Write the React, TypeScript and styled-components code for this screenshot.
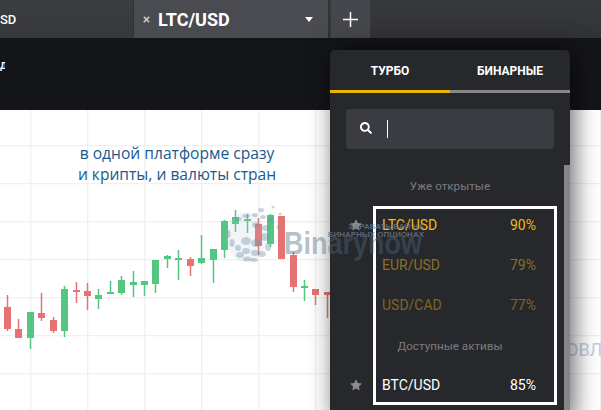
import React from "react";
import styled, { createGlobalStyle } from "styled-components";
import { FaSearch, FaTimes } from "react-icons/fa";

const GlobalStyle = createGlobalStyle`
  html, body {
    margin: 0;
    padding: 0;
    background: #fff;
    font-family: Roboto, "Liberation Sans", sans-serif;
  }
`;

const Page = styled.div`
  position: relative;
  width: 601px;
  height: 410px;
  overflow: hidden;
  display: flex;
  flex-direction: column;
`;

const TopBar = styled.div`
  height: 38px;
  display: flex;
  background: linear-gradient(#38393d, #323337);
  flex-shrink: 0;
`;

const AssetTab = styled.div<{ $active?: boolean }>`
  display: flex;
  align-items: center;
  width: ${(p) => (p.$active ? "195px" : "134px")};
  box-sizing: border-box;
  padding: ${(p) => (p.$active ? "0 15px 0 8px" : "0")};
  background: ${(p) => (p.$active ? "#4a4b50" : "linear-gradient(#3c3d41, #37383c)")};
  border-right: 1px solid #303135;
  color: #fff;
`;

const PartialLabel = styled.span`
  font-size: 13px;
  font-weight: 500;
  line-height: 1;
  margin-top: 1px;
`;

const CloseIcon = styled(FaTimes)`
  width: 9px;
  height: 9px;
  color: #c4c4c6;
`;

const TabTitle = styled.span`
  margin-left: 7px;
  font-size: 18px;
  font-weight: 700;
  flex: 1;
`;

const Caret = styled.span`
  width: 0;
  height: 0;
  border-left: 4.5px solid transparent;
  border-right: 4.5px solid transparent;
  border-top: 5px solid #fff;
`;

const AddTab = styled.div`
  width: 41px;
  margin-left: 1px;
  box-sizing: border-box;
  display: flex;
  align-items: center;
  justify-content: center;
  background: #46474c;
  border: 1px solid #36373b;
  border-top: 0;
  height: 39px;
`;

const InfoBand = styled.div`
  height: 72px;
  flex-shrink: 0;
  background: #141518;
  color: #fff;
  font-size: 12px;
  font-weight: 500;
  padding-top: 20px;
  box-sizing: border-box;
  line-height: 14px;
`;

const CutLetter = styled.span`
  display: block;
  width: 5px;
  overflow: hidden;
`;

const ChartArea = styled.div`
  position: relative;
  flex: 1;
  background: #fff;
`;

const ChartSvg = styled.svg`
  display: block;
`;

const Caption = styled.div`
  position: absolute;
  left: 55px;
  top: 33px;
  width: 244px;
  text-align: center;
  color: #1a5a8c;
  font-family: "Open Sans", sans-serif;
  font-size: 15.6px;
  line-height: 21px;
`;

const BackgroundWord = styled.div`
  position: absolute;
  left: 566px;
  top: 229px;
  color: #c2cee2;
  font-size: 18px;
  line-height: 22px;
  white-space: nowrap;
`;

const Panel = styled.div`
  position: absolute;
  left: 330px;
  top: 50px;
  width: 240px;
  height: 372px;
  background: #27282c;
  border-radius: 5px;
  box-shadow: 4px 0 24px rgba(0, 0, 0, 0.6);
`;

const PanelTabs = styled.div`
  display: flex;
  height: 43px;
`;

const PanelTab = styled.div<{ $active?: boolean }>`
  flex: 1;
  display: flex;
  align-items: center;
  justify-content: center;
  padding-top: 2px;
  box-sizing: border-box;
  color: #fff;
  font-size: 12px;
  font-weight: 700;
  border-bottom: 3px solid ${(p) => (p.$active ? "#e6b800" : "#88888c")};
`;

const SearchBox = styled.div`
  margin: 16px 16px 16px;
  height: 40px;
  display: flex;
  align-items: center;
  padding-left: 14px;
  background: #3b3c41;
  border-radius: 4px;
`;

const SearchIcon = styled(FaSearch)`
  width: 12px;
  height: 12px;
  color: #fff;
  margin-top: -2px;
`;

const TextCaret = styled.span`
  width: 1px;
  height: 18px;
  margin-left: 15px;
  background: #fff;
`;

const SectionLabel = styled.div`
  height: 40px;
  display: flex;
  align-items: center;
  justify-content: center;
  color: #7b7c80;
  font-size: 11.7px;
  padding-top: 2px;
  box-sizing: border-box;
`;

const AssetRow = styled.div<{ $color: string }>`
  height: 40px;
  display: flex;
  align-items: center;
  padding: 0 34px 0 20px;
  color: ${(p) => p.$color};
  font-size: 14px;
`;

const StarSlot = styled.span`
  width: 12px;
  height: 12px;
  margin-right: 20px;
  display: flex;
`;

const AssetName = styled.span`
  flex: 1;
`;

const ScrollThumb = styled.div`
  position: absolute;
  right: 0;
  top: 115px;
  width: 6px;
  bottom: 0;
  background: #85858a;
`;

const HighlightFrame = styled.div`
  position: absolute;
  left: 43px;
  top: 156px;
  width: 184px;
  height: 199px;
  box-sizing: border-box;
  border: 3px solid #fff;
  pointer-events: none;
`;

const Watermark = styled.div`
  position: absolute;
  left: 226px;
  top: 204px;
  width: 204px;
  height: 62px;
  pointer-events: none;
`;

const WatermarkName = styled.div`
  position: absolute;
  left: 58px;
  top: 23px;
  color: rgba(74, 104, 128, 0.42);
  font-family: "Liberation Sans", Arial, sans-serif;
  font-size: 31px;
  font-weight: 700;
  line-height: 34px;
  white-space: nowrap;
  transform: scaleX(0.87);
  transform-origin: left top;
`;

const WatermarkSmall = styled.div<{ $top: number }>`
  position: absolute;
  right: 6px;
  top: ${(p) => p.$top}px;
  color: rgba(110, 125, 145, 0.75);
  font-family: "Liberation Sans", Arial, sans-serif;
  font-size: 8px;
  font-weight: 700;
  line-height: 9px;
  white-space: nowrap;
`;

const GlobeSvg = styled.svg`
  position: absolute;
  left: 0;
  top: 0;
`;

const GREEN = "#55c681";
const RED = "#e57373";

// x, wick top, body top, body bottom, wick bottom (page pixels)
const candles: [number, number, number, number, number, string][] = [
  [7.5, 295, 307, 329, 331, RED],
  [18.5, 319, 329, 338, 338, RED],
  [30.5, 312, 312, 338, 349, GREEN],
  [41.5, 293, 313, 318, 321, RED],
  [53.5, 317, 320, 331, 333, RED],
  [64.5, 286, 289, 331, 337, GREEN],
  [76.5, 282, 290, 292, 303, RED],
  [87.5, 283, 291, 296, 310, RED],
  [98.5, 289, 295, 299, 309, GREEN],
  [110.5, 281, 292, 294, 294, GREEN],
  [121.5, 276, 280, 293, 295, GREEN],
  [133.5, 271, 282, 285, 297, GREEN],
  [144.5, 281, 281, 285, 296, GREEN],
  [155.5, 260, 260, 284, 293, GREEN],
  [167.5, 255, 256, 259, 268, GREEN],
  [178.5, 250, 258, 260, 280, GREEN],
  [190.5, 257, 259, 266, 276, RED],
  [201.5, 235, 258, 263, 264, GREEN],
  [213.5, 249, 249, 260, 283, GREEN],
  [224.5, 220, 221, 250, 258, GREEN],
  [235.5, 210, 217, 224, 232, GREEN],
  [247.5, 214, 219, 221, 233, GREEN],
  [258.5, 218, 224, 246, 255, RED],
  [270.5, 214, 215, 244, 247, GREEN],
  [281.5, 216, 216, 259, 259, RED],
  [293.5, 252, 255, 287, 292, RED],
  [304.5, 280, 286, 288, 301, GREEN],
  [315.5, 289, 289, 295, 305, RED],
  [327.5, 292, 292, 295, 318, RED],
];

const gridX = [30, 87, 144, 201, 258, 315, 372, 429, 486, 543, 600];
const gridY = [145, 183, 221, 259, 297, 335, 373];

// globe dots: cx, cy, rx, ry (watermark-local pixels)
const globeDots: [number, number, number, number][] = [
  [14, 51, 4, 3], [21, 55, 4, 2.5], [28, 56, 4, 2], [36, 50, 4, 3],
  [42, 43, 3, 4], [29, 49, 4, 3], [20, 47, 4, 3], [12, 44, 3, 3],
  [6, 39, 2.5, 4], [3, 30, 1.5, 4], [30, 39, 5, 4], [39, 33, 4, 4],
  [29, 11, 3, 2], [35, 6, 3, 2], [47, 3, 1.5, 1.5], [54, 10, 1.5, 1.5],
  [37, 13, 3, 2], [52, 23, 1.5, 2.5], [44, 16, 3, 3], [30, 21, 4, 3],
  [40, 24, 4, 3], [20, 37, 5, 4], [12, 15, 4, 2], [20, 12, 4, 2],
];

const Star = () => (
  <svg width="12" height="12" viewBox="0 0 24 24">
    <polygon
      fill="#8b8b8e"
      points="12,0.5 15.6,8 24,9.1 17.8,14.8 19.4,23.2 12,19.1 4.6,23.2 6.2,14.8 0,9.1 8.4,8"
    />
  </svg>
);

const assetRows = {
  ltc: { name: "LTC/USD", pct: "90%", color: "#eebd0a", star: true },
  eur: { name: "EUR/USD", pct: "79%", color: "#8a701f", star: false },
  cad: { name: "USD/CAD", pct: "77%", color: "#7e6722", star: false },
  btc: { name: "BTC/USD", pct: "85%", color: "#ffffff", star: true },
};

const Row = ({ item }: { item: (typeof assetRows)["ltc"] }) => (
  <AssetRow $color={item.color}>
    <StarSlot>{item.star && <Star />}</StarSlot>
    <AssetName>{item.name}</AssetName>
    <span>{item.pct}</span>
  </AssetRow>
);

export default function App() {
  return (
    <Page>
      <GlobalStyle />
      <TopBar>
        <AssetTab>
          <PartialLabel>SD</PartialLabel>
        </AssetTab>
        <AssetTab $active>
          <CloseIcon />
          <TabTitle>LTC/USD</TabTitle>
          <Caret />
        </AssetTab>
        <AddTab>
          <svg width="15" height="15" viewBox="0 0 15 15">
            <path d="M7.5 0v15M0 7.5h15" stroke="#fff" strokeWidth="1.5" fill="none" />
          </svg>
        </AddTab>
      </TopBar>
      <InfoBand>
        <CutLetter>д</CutLetter>
      </InfoBand>
      <ChartArea>
        <ChartSvg width="601" height="300" viewBox="0 110 601 300">
          {gridX.map((x) => (
            <line key={x} x1={x + 0.7} x2={x + 0.7} y1="110" y2="410" stroke="#f0f0f0" strokeWidth="1.3" />
          ))}
          {gridY.map((y) => (
            <line key={y} x1="0" x2="601" y1={y + 0.7} y2={y + 0.7} stroke="#f0f0f0" strokeWidth="1.3" />
          ))}
          {candles.map(([x, wt, bt, bb, wb, color]) => (
            <g key={x} fill={color}>
              <rect x={x - 0.75} y={wt} width="1.5" height={wb - wt} />
              <rect x={x - 3.5} y={bt} width="7" height={bb - bt} />
            </g>
          ))}
        </ChartSvg>
        <Caption>
          в одной платформе сразу
          <br />и крипты, и валюты стран
        </Caption>
        <BackgroundWord>ОВЛ</BackgroundWord>
      </ChartArea>
      <Panel>
        <PanelTabs>
          <PanelTab $active>ТУРБО</PanelTab>
          <PanelTab>БИНАРНЫЕ</PanelTab>
        </PanelTabs>
        <SearchBox>
          <SearchIcon />
          <TextCaret />
        </SearchBox>
        <SectionLabel>Уже открытые</SectionLabel>
        <Row item={assetRows.ltc} />
        <Row item={assetRows.eur} />
        <Row item={assetRows.cad} />
        <SectionLabel>Доступные активы</SectionLabel>
        <Row item={assetRows.btc} />
        <ScrollThumb />
        <HighlightFrame />
      </Panel>
      <Watermark>
        <GlobeSvg width="66" height="62" viewBox="0 0 66 62">
          <ellipse cx="20" cy="33" rx="20" ry="25" fill="rgba(170, 195, 210, 0.16)" />
          {globeDots.map(([cx, cy, rx, ry]) => (
            <ellipse
              key={`${cx}-${cy}`}
              cx={cx}
              cy={cy}
              rx={rx}
              ry={ry}
              fill="rgba(110, 145, 165, 0.38)"
            />
          ))}
        </GlobeSvg>
        <WatermarkSmall $top={18}>ЗАРАБАТЫВАЙ НА</WatermarkSmall>
        <WatermarkSmall $top={26}>БИНАРНЫХ ОПЦИОНАХ</WatermarkSmall>
        <WatermarkName>Binarynow</WatermarkName>
      </Watermark>
    </Page>
  );
}
